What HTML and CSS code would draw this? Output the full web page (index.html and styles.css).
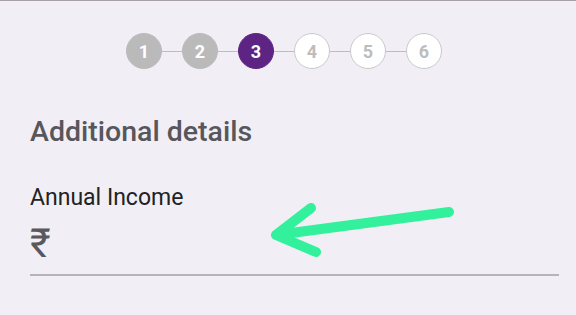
FILE: index.html
```html
<!DOCTYPE html>
<html lang="en">

<head>
    <meta charset="UTF-8">
    <meta name="viewport" content="width=device-width, initial-scale=1.0">
    <title>Additional details</title>
    <link rel="stylesheet" href="styles.css">
</head>

<body>
    <div class="topbar"></div>

    <div class="stepper">
        <span class="step done">1</span>
        <span class="line"></span>
        <span class="step done">2</span>
        <span class="line"></span>
        <span class="step active">3</span>
        <span class="line"></span>
        <span class="step">4</span>
        <span class="line"></span>
        <span class="step">5</span>
        <span class="line"></span>
        <span class="step">6</span>
    </div>

    <div class="form">
        <h2 class="heading">Additional details</h2>

        <div class="field">
            <label for="income">Annual Income</label>
            <div class="input-row">
                <span class="currency">₹</span>
                <input id="income" type="text">
            </div>
        </div>
    </div>

    <svg class="arrow" width="200" height="60" viewBox="0 0 200 60">
        <path d="M178 10 L5 33 M5 33 L40 6 M5 33 L45 50" fill="none" stroke="#33f09c" stroke-width="10" stroke-linecap="round" stroke-linejoin="round" />
    </svg>
</body>

</html>
```

FILE: styles.css
```css
* {
    padding: 0;
    margin: 0;
    box-sizing: border-box;
}

body {
    position: relative;
    background: #f1eff5;
    font-family: Roboto, "Noto Sans", sans-serif;
    width: 576px;
    height: 315px;
    overflow: hidden;
}

.topbar {
    height: 1px;
    background: #a89fab;
}

.stepper {
    display: flex;
    align-items: center;
    justify-content: center;
    margin-top: 32px;
    padding-right: 8px;
}

.step {
    width: 36px;
    height: 36px;
    border-radius: 50%;
    border: 1px solid #c9c9c9;
    background: #ffffff;
    color: #bdbdbd;
    font-size: 18px;
    font-weight: 700;
    display: flex;
    align-items: center;
    justify-content: center;
}

.step.done {
    background: #bababa;
    border-color: #bababa;
    color: #ffffff;
}

.step.active {
    background: #5e2483;
    border-color: #5e2483;
    color: #ffffff;
}

.line {
    width: 20px;
    height: 1px;
    background: #bdbdbd;
}

.form {
    padding: 0 17px 0 30px;
}

.heading {
    margin-top: 46px;
    font-size: 28.5px;
    font-weight: 500;
    color: #58565b;
}

.field {
    margin-top: 36px;
}

.field label {
    display: block;
    font-size: 23px;
    color: #222222;
}

.input-row {
    display: flex;
    align-items: center;
    margin-top: 13px;
    padding-bottom: 10px;
    border-bottom: 2px solid #b5b4b8;
}

.currency {
    font-size: 40px;
    line-height: 40px;
    color: #5a585c;
}

.input-row input {
    flex: 1;
    border: none;
    background: transparent;
    outline: none;
    font-size: 20px;
    margin-left: 6px;
}

.arrow {
    position: absolute;
    left: 271px;
    top: 202px;
}
```
